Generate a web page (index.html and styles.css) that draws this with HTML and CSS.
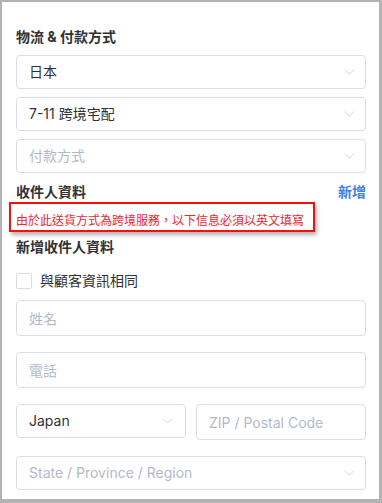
FILE: index.html
```html
<!DOCTYPE html>
<html lang="zh-Hant">
<head>
<meta charset="utf-8">
<title>物流 & 付款方式</title>
<link rel="stylesheet" href="styles.css">
</head>
<body>
<div class="frame">
  <h2 class="title">物流 &amp; 付款方式</h2>
  <div class="stack">
    <div class="select"><span class="value">日本</span><svg class="chev" viewBox="0 0 12 7"><path d="M0.5 0.5 L6 6 L11.5 0.5"/></svg></div>
    <div class="select"><span class="value">7-11 跨境宅配</span><svg class="chev" viewBox="0 0 12 7"><path d="M0.5 0.5 L6 6 L11.5 0.5"/></svg></div>
    <div class="select"><span class="value placeholder">付款方式</span><svg class="chev" viewBox="0 0 12 7"><path d="M0.5 0.5 L6 6 L11.5 0.5"/></svg></div>
  </div>

  <div class="row-head">
    <h3 class="subtitle">收件人資料</h3>
    <a class="add-link">新增</a>
  </div>
  <div class="notice"><span class="notice-text">由於此送貨方式為跨境服務，以下信息必須以英文填寫</span></div>
  <h3 class="subtitle sub2">新增收件人資料</h3>

  <label class="check-row"><span class="checkbox"></span><span class="check-label">與顧客資訊相同</span></label>

  <div class="fields">
    <input class="input" type="text" placeholder="姓名">
    <input class="input" type="text" placeholder="電話">
    <div class="two-col">
      <div class="select"><span class="value latin">Japan</span><svg class="chev" viewBox="0 0 12 7"><path d="M0.5 0.5 L6 6 L11.5 0.5"/></svg></div>
      <input class="input" type="text" placeholder="ZIP / Postal Code">
    </div>
    <div class="select state"><span class="value placeholder latin">State / Province / Region</span><svg class="chev" viewBox="0 0 12 7"><path d="M0.5 0.5 L6 6 L11.5 0.5"/></svg></div>
  </div>
</div>
</body>
</html>
```

FILE: styles.css
```css
* { box-sizing: border-box; }
html, body { margin: 0; padding: 0; }
body {
  background: #b3b3b3;
  font-family: Inter, "Noto Sans CJK TC", "Noto Sans", sans-serif;
  color: #303133;
  width: 382px;
  height: 503px;
  overflow: hidden;
}
.frame {
  margin: 2px 3px 0 2px;
  height: 497px;
  background: #fff;
  padding: 25px 13px 0 14px;
}
.title {
  margin: 0;
  font-size: 14px;
  line-height: 20px;
  font-weight: 700;
  color: #303133;
}
.stack {
  margin-top: 8px;
  display: flex;
  flex-direction: column;
  gap: 8px;
}
.select {
  height: 34px;
  border: 1px solid #d8dde8;
  border-radius: 4px;
  display: flex;
  align-items: center;
  justify-content: space-between;
  padding: 0 10px 0 12px;
  background: #fff;
}
.value {
  font-size: 14px;
  line-height: 20px;
  color: #303133;
}
.value.placeholder { color: #b4b9c8; }
.chev {
  width: 11px;
  height: 6px;
  fill: none;
  stroke: #c8ccd4;
  stroke-width: 1;
}
.row-head {
  margin-top: 9px;
  display: flex;
  justify-content: space-between;
  align-items: center;
}
.subtitle {
  margin: 0;
  font-size: 14px;
  line-height: 20px;
  font-weight: 600;
  color: #303133;
}
.add-link {
  font-size: 14px;
  line-height: 20px;
  font-weight: 700;
  color: #4080e8;
}
.notice {
  margin: 0 0 0 -7px;
  width: 306px;
  height: 30px;
  border: 2px solid #f50f0f;
  padding: 7px 0 0 5px;
  box-shadow: 2px 3px 4px rgba(0,0,0,0.3);
  line-height: 17px;
}
.notice-text {
  font-family: "Noto Sans CJK TC", sans-serif;
  font-size: 12px;
  letter-spacing: 0;
  color: #ee2431;
  white-space: nowrap;
}
.sub2 { margin-top: 5px; }
.check-row {
  margin-top: 16px;
  display: flex;
  align-items: center;
  gap: 8px;
  height: 16px;
}
.checkbox {
  width: 16px;
  height: 16px;
  border: 1px solid #d8dde8;
  border-radius: 2px;
  background: #fff;
}
.check-label {
  font-size: 14px;
  line-height: 20px;
  color: #303133;
}
.fields {
  margin-top: 11px;
  display: flex;
  flex-direction: column;
  gap: 16px;
}
.input {
  display: block;
  width: 100%;
  height: 36px;
  border: 1px solid #d8dde8;
  border-radius: 4px;
  padding: 0 12px;
  font-family: Inter, "Noto Sans CJK TC", sans-serif;
  font-size: 14px;
  color: #303133;
  background: #fff;
  outline: none;
}
.input::placeholder { color: #b4b9c8; }
.two-col {
  display: grid;
  grid-template-columns: 1fr 1fr;
  gap: 10px;
  align-items: start;
}
.two-col .select { padding-right: 12px; }
```
